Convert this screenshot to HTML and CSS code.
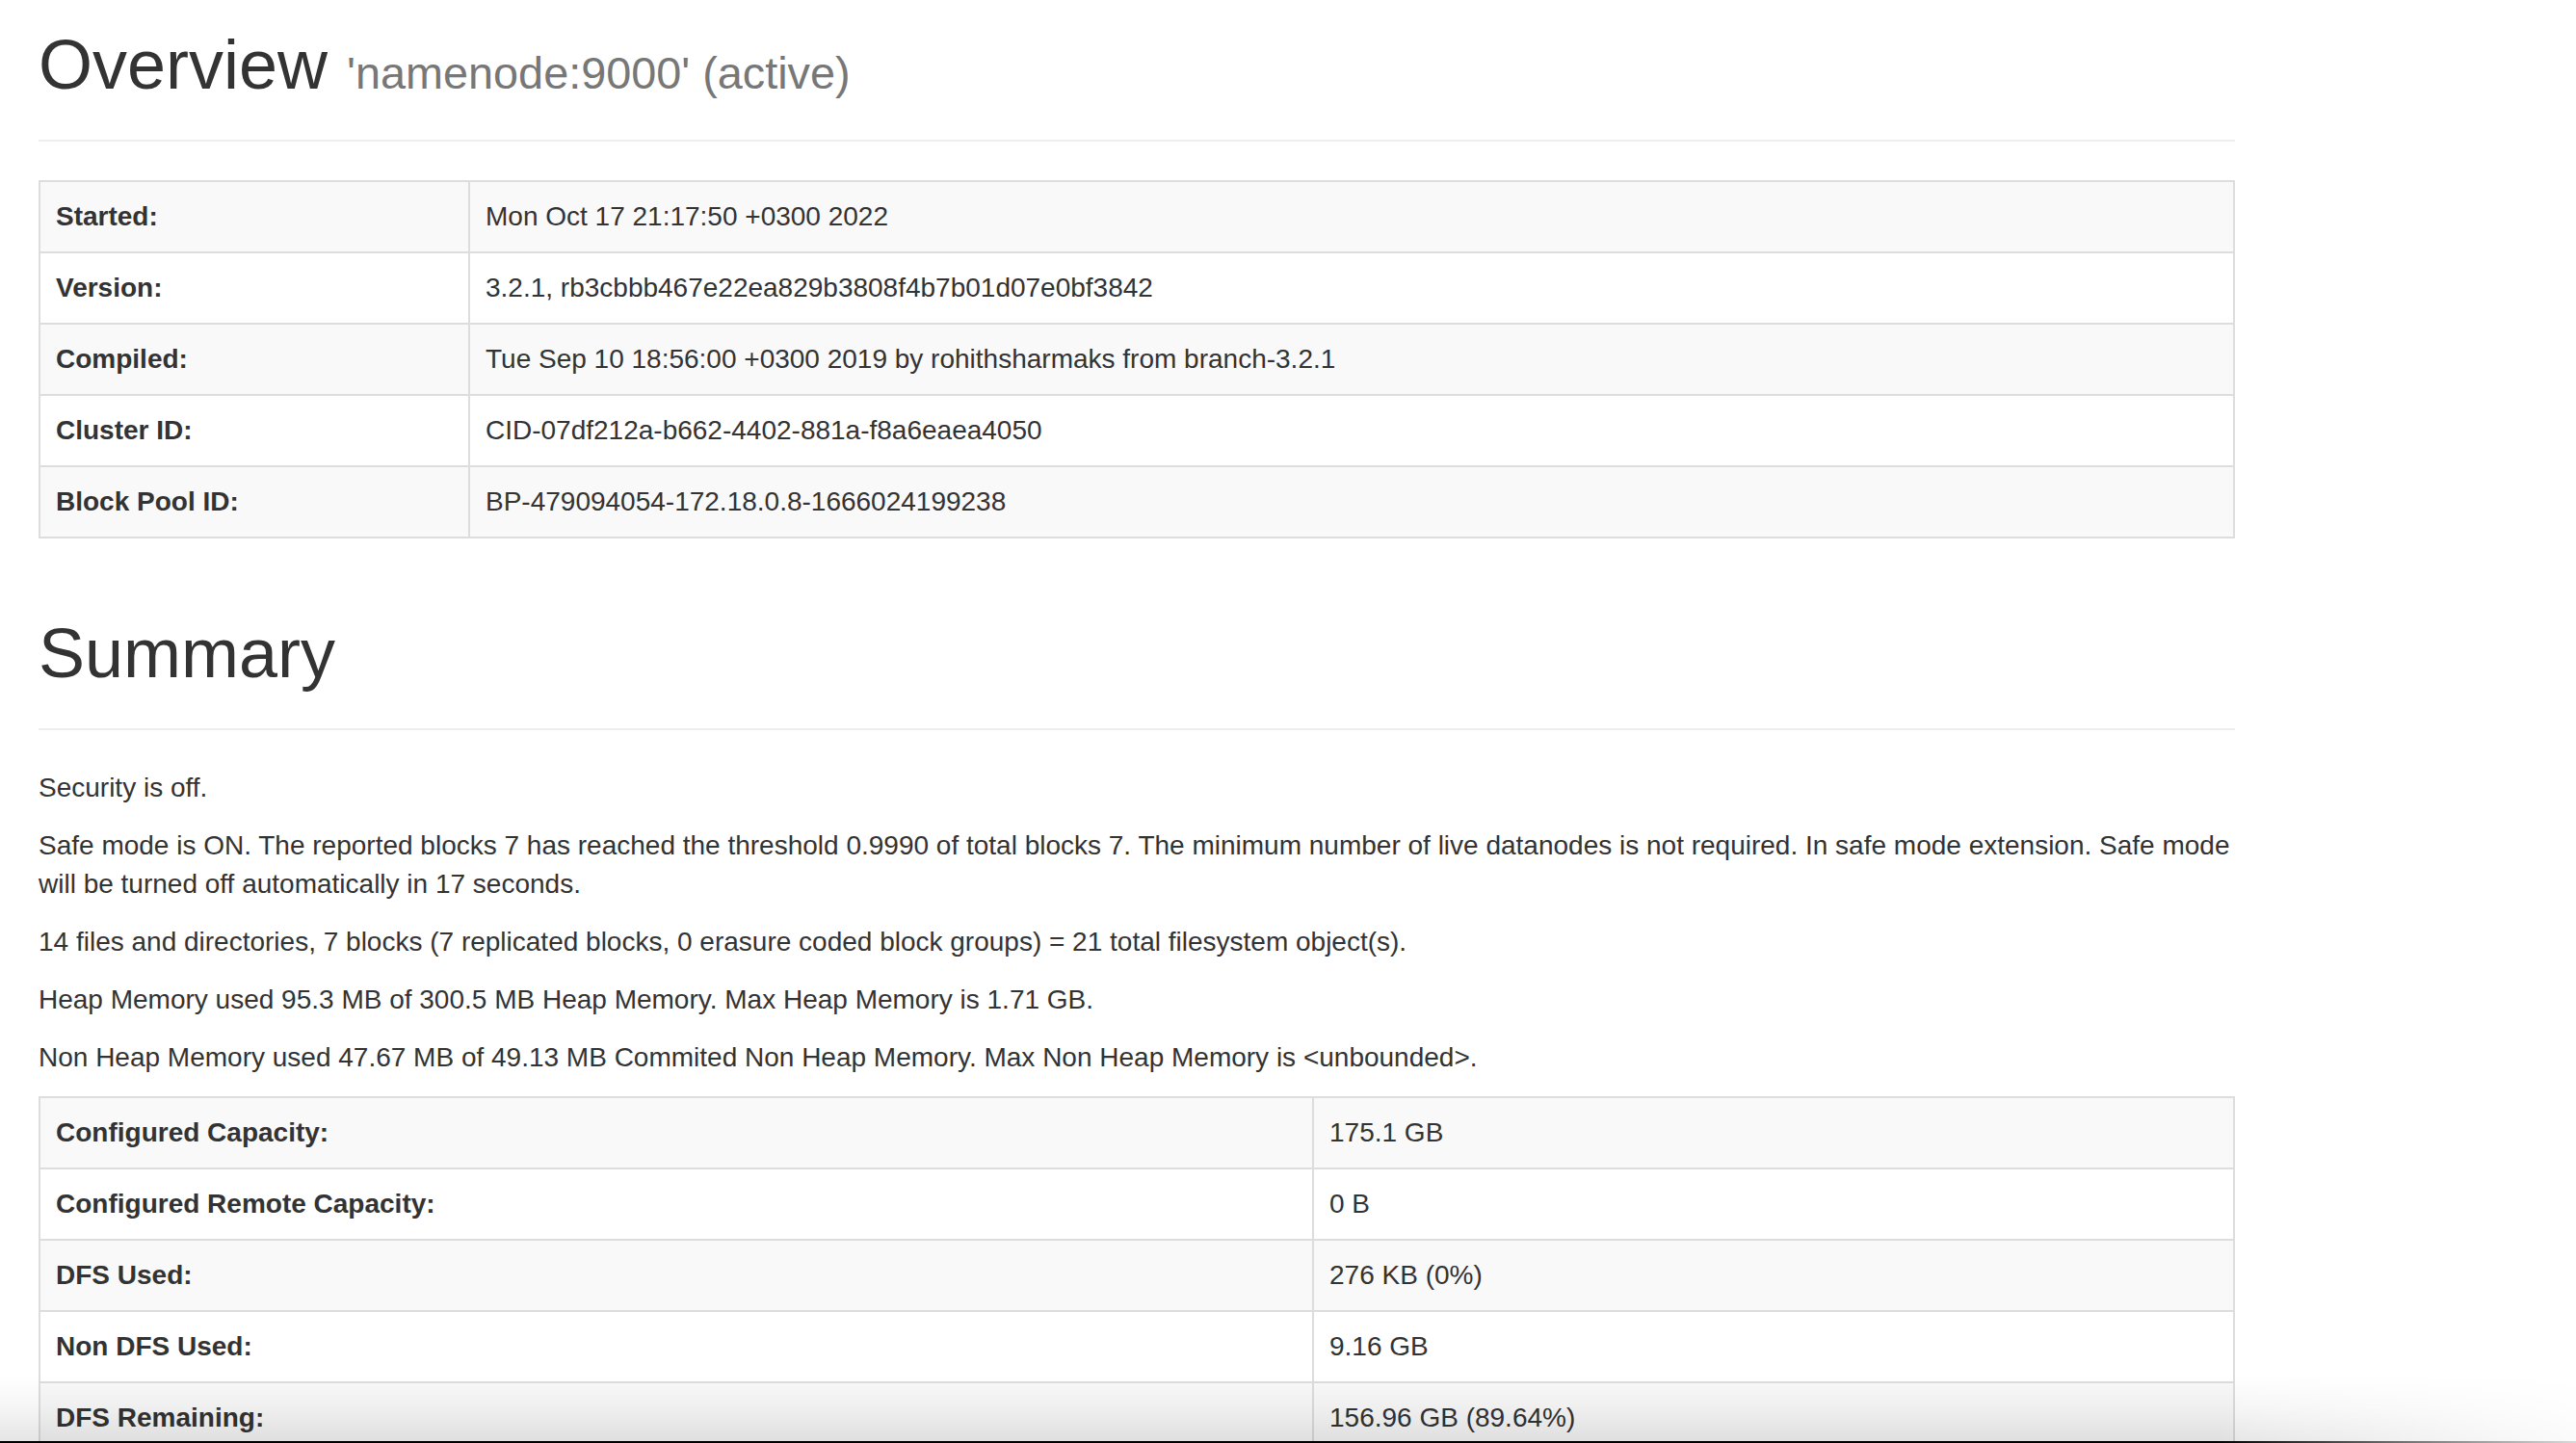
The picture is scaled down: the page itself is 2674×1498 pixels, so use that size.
FILE: index.html
```html
<!DOCTYPE html>
<html lang="en">
<head>
<meta charset="utf-8">
<title>Namenode information</title>
<link rel="stylesheet" href="styles.css">
</head>
<body>
<div class="container">
  <div class="page-header first">
    <h1>Overview <small>'namenode:9000' (active)</small></h1>
  </div>
  <table class="table table-overview">
    <colgroup><col class="col-key-1"><col></colgroup>
    <tbody>
      <tr><th>Started:</th><td>Mon Oct 17 21:17:50 +0300 2022</td></tr>
      <tr><th>Version:</th><td>3.2.1, rb3cbbb467e22ea829b3808f4b7b01d07e0bf3842</td></tr>
      <tr><th>Compiled:</th><td>Tue Sep 10 18:56:00 +0300 2019 by rohithsharmaks from branch-3.2.1</td></tr>
      <tr><th>Cluster ID:</th><td>CID-07df212a-b662-4402-881a-f8a6eaea4050</td></tr>
      <tr><th>Block Pool ID:</th><td>BP-479094054-172.18.0.8-1666024199238</td></tr>
    </tbody>
  </table>

  <div class="page-header">
    <h1>Summary</h1>
  </div>
  <p>Security is off.</p>
  <p>Safe mode is ON. The reported blocks 7 has reached the threshold 0.9990 of total blocks 7. The minimum number of live datanodes is not required. In safe mode extension. Safe mode will be turned off automatically in 17 seconds.</p>
  <p>14 files and directories, 7 blocks (7 replicated blocks, 0 erasure coded block groups) = 21 total filesystem object(s).</p>
  <p>Heap Memory used 95.3 MB of 300.5 MB Heap Memory. Max Heap Memory is 1.71 GB.</p>
  <p>Non Heap Memory used 47.67 MB of 49.13 MB Commited Non Heap Memory. Max Non Heap Memory is &lt;unbounded&gt;.</p>
  <table class="table table-summary">
    <colgroup><col class="col-key-2"><col></colgroup>
    <tbody>
      <tr><th>Configured Capacity:</th><td>175.1 GB</td></tr>
      <tr><th>Configured Remote Capacity:</th><td>0 B</td></tr>
      <tr><th>DFS Used:</th><td>276 KB (0%)</td></tr>
      <tr><th>Non DFS Used:</th><td>9.16 GB</td></tr>
      <tr><th>DFS Remaining:</th><td>156.96 GB (89.64%)</td></tr>
      <tr><th>Block Pool Used:</th><td>276 KB (0%)</td></tr>
    </tbody>
  </table>
</div>
<div class="window-shade"></div>
</body>
</html>
```

FILE: styles.css
```css
html, body {
  margin: 0;
  padding: 0;
  height: 100%;
  overflow: hidden;
  background: #fff;
}

body {
  font-family: "Liberation Sans", Arial, Helvetica, sans-serif;
  font-size: 28px;
  line-height: 40px;
  color: #333;
}

.container {
  width: 2280px;
  padding: 0 40px;
}

.page-header {
  margin: 80px 0 40px;
  padding-bottom: 18px;
  border-bottom: 2px solid #eee;
}

.page-header.first {
  margin-top: 28px;
}

h1 {
  margin: 0 0 20px;
  font-size: 72px;
  font-weight: 500;
  line-height: 1.1;
  color: #333;
}

h1 small {
  font-size: 65%;
  font-weight: normal;
  line-height: 1;
  color: #777;
}

p {
  margin: 0 0 20px;
}

.table {
  width: 100%;
  margin-bottom: 40px;
  border-collapse: collapse;
  border-spacing: 0;
  table-layout: fixed;
  border: 2px solid #ddd;
}

.col-key-1 {
  width: 446px;
}

.col-key-2 {
  width: 1322px;
}

.table th,
.table td {
  padding: 16px;
  line-height: 40px;
  text-align: left;
  vertical-align: top;
  border: 2px solid #ddd;
  white-space: nowrap;
}

.table th {
  font-weight: bold;
}

.table tbody tr:nth-child(odd) {
  background-color: #f9f9f9;
}

.window-shade {
  position: fixed;
  left: 0;
  right: 0;
  bottom: 0;
  height: 68px;
  background: linear-gradient(to bottom, rgba(0, 0, 0, 0) 0%, rgba(0, 0, 0, 0.04) 50%, rgba(0, 0, 0, 0.1) 100%);
  -webkit-mask-image: linear-gradient(to right, #000 0%, #000 86%, rgba(0, 0, 0, 0.15) 100%);
  mask-image: linear-gradient(to right, #000 0%, #000 86%, rgba(0, 0, 0, 0.15) 100%);
  border-bottom: 2px solid #000;
}
```
